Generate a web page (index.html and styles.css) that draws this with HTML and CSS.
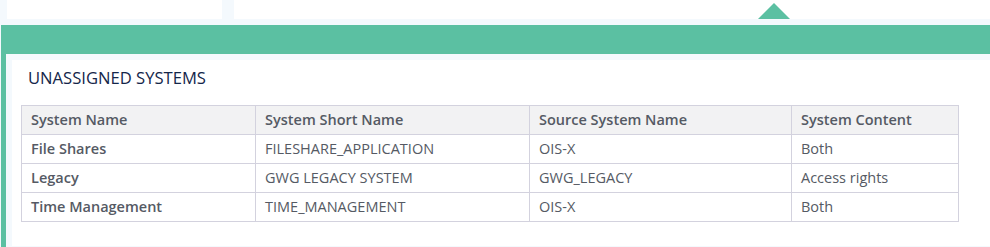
FILE: index.html
```html
<!DOCTYPE html>
<html lang="en">
<head>
<meta charset="utf-8">
<title>Unassigned systems</title>
<link rel="stylesheet" href="styles.css">
</head>
<body>
<div class="top-row">
  <div class="card card-left"></div>
  <div class="card card-right"><span class="pointer"></span></div>
</div>
<section class="panel">
  <div class="panel-frame">
    <div class="panel-body">
      <h2 class="panel-title">UNASSIGNED SYSTEMS</h2>
      <table class="systems">
        <colgroup>
          <col class="c1"><col class="c2"><col class="c3"><col class="c4">
        </colgroup>
        <thead>
          <tr><th>System Name</th><th>System Short Name</th><th>Source System Name</th><th>System Content</th></tr>
        </thead>
        <tbody>
          <tr><td class="name">File Shares</td><td>FILESHARE_APPLICATION</td><td>OIS-X</td><td>Both</td></tr>
          <tr><td class="name">Legacy</td><td>GWG LEGACY SYSTEM</td><td>GWG_LEGACY</td><td>Access rights</td></tr>
          <tr><td class="name">Time Management</td><td>TIME_MANAGEMENT</td><td>OIS-X</td><td>Both</td></tr>
        </tbody>
      </table>
    </div>
  </div>
</section>
</body>
</html>
```
FILE: styles.css
```css
* { box-sizing: border-box; }
html, body { margin: 0; padding: 0; }
body {
  background: #f4f9fd;
  font-family: "Open Sans", "Noto Sans", sans-serif;
  width: 990px;
  height: 247px;
  overflow: hidden;
}
.top-row {
  display: flex;
  gap: 12px;
  padding-left: 7px;
  height: 25px;
  padding-bottom: 6px;
}
.card {
  background: #ffffff;
  height: 19px;
}
.card-left { width: 215px; }
.card-right { flex: 1; position: relative; }
.pointer {
  position: absolute;
  left: 524px;
  bottom: 0;
  width: 0;
  height: 0;
  border-left: 16px solid transparent;
  border-right: 16px solid transparent;
  border-bottom: 16px solid #5bc0a2;
}
.panel {
  margin-left: 1px;
  width: 1010px;
  background: #5bc0a2;
  padding: 29px 0 0 5px;
}
.panel-frame {
  background: #f4f9fd;
  padding: 6px 0 2px 6px;
}
.panel-body {
  background: #ffffff;
  padding: 6px 0 24px 9px;
}
.panel-title {
  margin: 0 0 15px 7px;
  font-size: 16.6px;
  font-weight: 400;
  color: #14264a;
  line-height: 24px;
}
.systems {
  border-collapse: collapse;
  width: 937px;
  table-layout: fixed;
  font-size: 14.5px;
  color: #555a64;
}
.c1 { width: 234px; }
.c2 { width: 274px; }
.c3 { width: 262px; }
.c4 { width: 167px; }
.systems th, .systems td {
  border: 1px solid #d3d2de;
  height: 29px;
  padding: 0 9px;
  text-align: left;
  white-space: nowrap;
  line-height: 20px;
}
.systems th {
  background: #f2f2f3;
  font-weight: 600;
}
.systems td.name { font-weight: 600; }
```
